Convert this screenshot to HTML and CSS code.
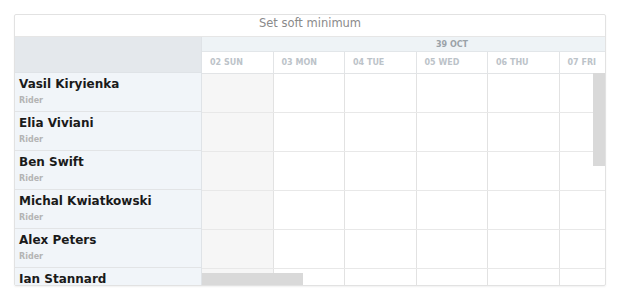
FILE: index.html
```html
<!DOCTYPE html>
<html lang="en">
<head>
    <meta charset="UTF-8">
    <title>Scheduler - Set soft minimum</title>
    <link rel="stylesheet" href="styles.css">
</head>
<body>
    <div class="scheduler">
        <div class="title">Set soft minimum</div>
        <div class="grid">
            <div class="side">
                <div class="side-head"></div>
                <div class="resource"><div class="name">Vasil Kiryienka</div><div class="role">Rider</div></div>
                <div class="resource"><div class="name">Elia Viviani</div><div class="role">Rider</div></div>
                <div class="resource"><div class="name">Ben Swift</div><div class="role">Rider</div></div>
                <div class="resource"><div class="name">Michal Kwiatkowski</div><div class="role">Rider</div></div>
                <div class="resource"><div class="name">Alex Peters</div><div class="role">Rider</div></div>
                <div class="resource"><div class="name">Ian Stannard</div><div class="role">Rider</div></div>
            </div>
            <div class="main">
                <div class="timeline">
                    <div class="week">39 OCT</div>
                    <div class="days">
                        <div class="day">02 SUN</div>
                        <div class="day">03 MON</div>
                        <div class="day">04 TUE</div>
                        <div class="day">05 WED</div>
                        <div class="day">06 THU</div>
                        <div class="day">07 FRI</div>
                        <div class="day">08 SAT</div>
                    </div>
                    <div class="rows" id="rows"></div>
                </div>
                <div class="vscroll"></div>
                <div class="hscroll"></div>
            </div>
        </div>
    </div>

    <script>
        const rows = document.getElementById('rows');
        for (let r = 0; r < 6; r++) {
            const row = document.createElement('div');
            row.className = 'row';
            for (let d = 0; d < 7; d++) {
                const cell = document.createElement('div');
                cell.className = d === 0 || d === 6 ? 'cell weekend' : 'cell';
                row.appendChild(cell);
            }
            rows.appendChild(row);
        }
    </script>
</body>
</html>
```

FILE: styles.css
```css
body {
    font-family: 'DejaVu Sans', sans-serif;
    margin: 0;
    padding: 14px;
    background-color: #fff;
}

.scheduler {
    width: 590px;
    height: 270px;
    border: 1px solid #e2e2e2;
    border-radius: 2px;
    box-shadow: 0 1px 2px rgba(0, 0, 0, 0.06);
    display: flex;
    flex-direction: column;
    overflow: hidden;
}

.title {
    height: 21px;
    line-height: 17px;
    text-align: center;
    font-size: 11.5px;
    color: #8a8a8a;
    border-bottom: 1px solid #e6e6e6;
    flex-shrink: 0;
}

.grid {
    display: flex;
    flex: 1;
    min-height: 0;
}

.side {
    width: 186px;
    flex-shrink: 0;
    background: #f1f5f9;
    border-right: 1px solid #dfe3e7;
}

.side-head {
    height: 35px;
    background: #e4e8ec;
    border-bottom: 1px solid #dfe3e7;
}

.resource {
    height: 39px;
    padding: 3px 0 0 4px;
    box-sizing: border-box;
    border-bottom: 1px solid #e2e4e6;
}

.name {
    font-size: 12px;
    font-weight: 700;
    color: #1a1a1a;
    line-height: 16px;
}

.role {
    font-size: 8px;
    font-weight: 700;
    color: #b4b4b4;
    margin-top: 4px;
}

.main {
    flex: 1;
    position: relative;
    overflow: hidden;
}

.timeline {
    width: 500px;
}

.week {
    height: 15px;
    line-height: 15px;
    background: #eef3f6;
    text-align: center;
    font-size: 8px;
    font-weight: 700;
    color: #9aa2a8;
    border-bottom: 1px solid #e2e6e9;
    box-sizing: border-box;
}

.days {
    display: flex;
    height: 21px;
    border-bottom: 1px solid #e2e4e6;
}

.day {
    width: 71.5px;
    flex-shrink: 0;
    box-sizing: border-box;
    border-right: 1px solid #e2e4e6;
    padding-left: 8px;
    font-size: 8px;
    font-weight: 700;
    color: #bcc3c9;
    line-height: 21px;
}

.row {
    display: flex;
    height: 39px;
    box-sizing: border-box;
    border-bottom: 1px solid #e8e8e8;
}

.cell {
    width: 71.5px;
    flex-shrink: 0;
    box-sizing: border-box;
    border-right: 1px solid #e2e2e2;
}

.weekend {
    background: #f6f6f6;
}

.vscroll {
    position: absolute;
    top: 36px;
    right: 0;
    width: 12px;
    height: 93px;
    background: #d9d9d9;
}

.hscroll {
    position: absolute;
    bottom: 0;
    left: 0;
    width: 101px;
    height: 12px;
    background: #d9d9d9;
}
```
